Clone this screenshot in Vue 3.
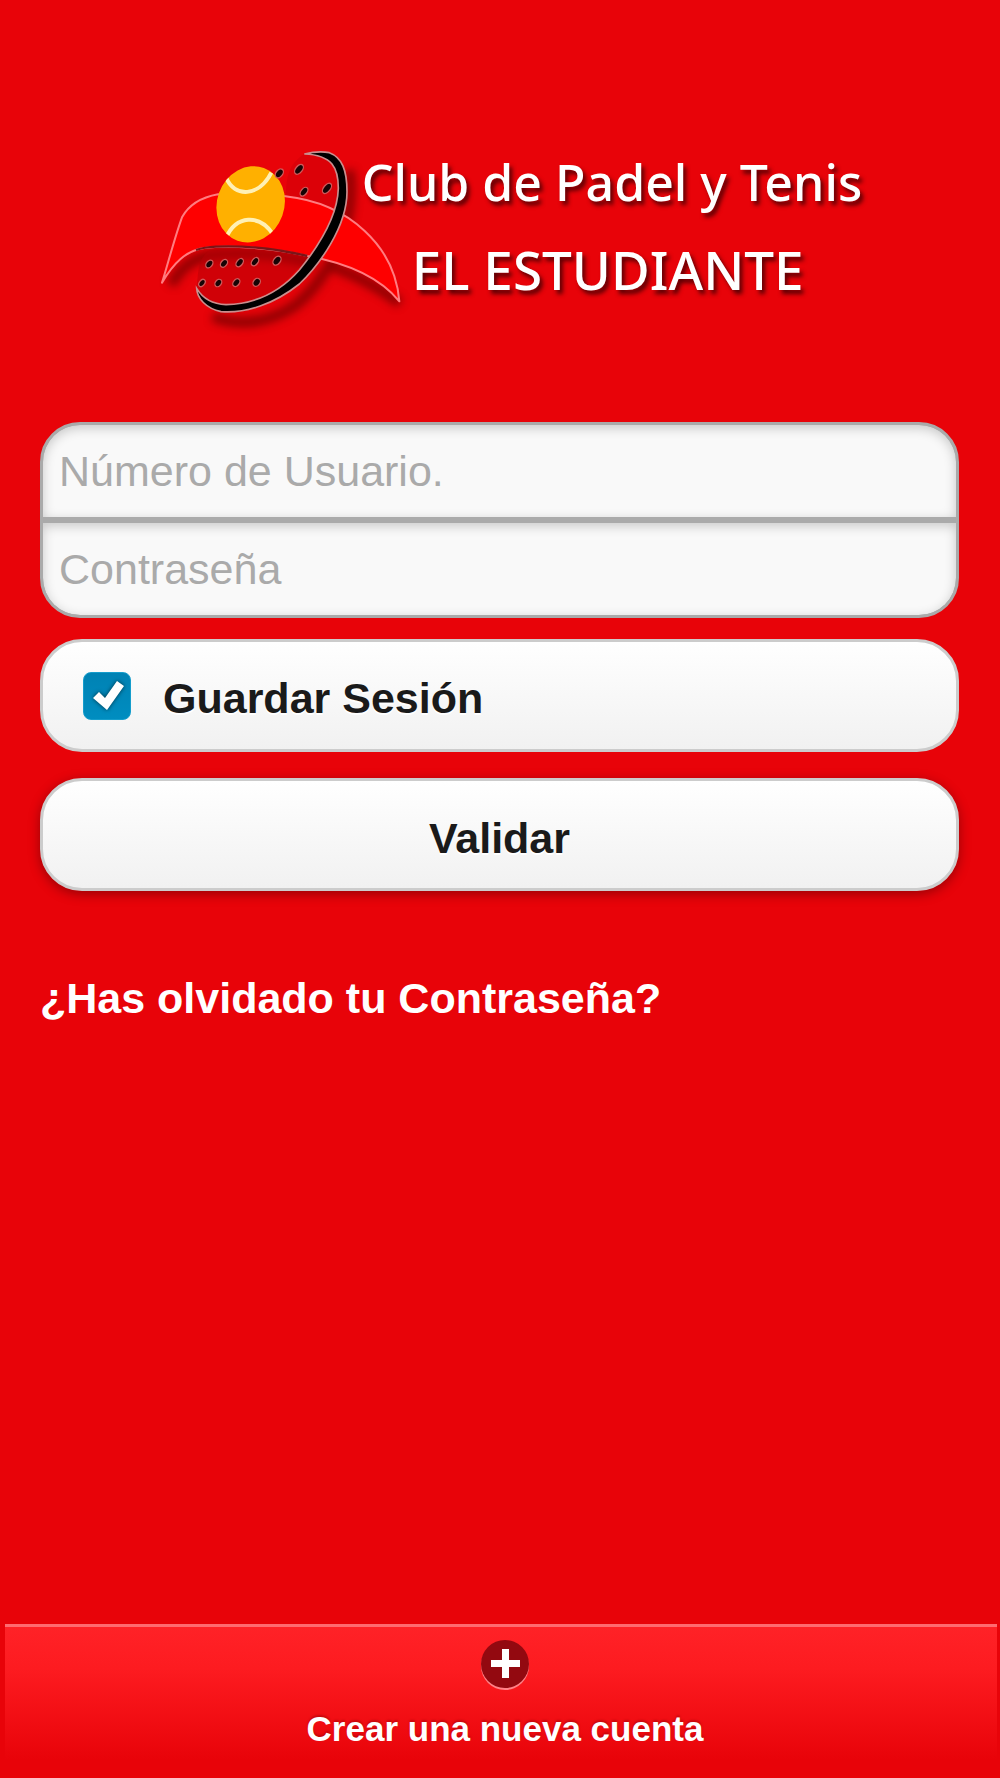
<script setup>
import { ref } from 'vue'

const user = ref('')
const password = ref('')
const remember = ref(true)

const holes = [
  [400, 130, 10, 15], [459, 118, 10, 17], [474, 185, 9, 15], [543, 175, 10, 18],
  [190, 402, 9, 13], [234, 400, 9, 13], [281, 398, 9, 14], [327, 395, 9, 14], [393, 392, 10, 15],
  [168, 459, 8, 12], [217, 459, 9, 12], [271, 458, 9, 13], [332, 457, 10, 13]
]
</script>

<template>
  <div class="page">
    <header class="logo">
      <svg class="emblem" viewBox="0 0 648 630" aria-hidden="true">
        <defs>
          <filter id="soft" x="-20%" y="-20%" width="140%" height="150%">
            <feGaussianBlur stdDeviation="13" />
          </filter>
          <clipPath id="ball">
            <ellipse cx="314" cy="223" rx="101" ry="116" transform="rotate(20 314 223)" />
          </clipPath>
        </defs>
        <g filter="url(#soft)" fill="none" stroke="#700006" stroke-width="30" opacity=".75">
          <path d="M75 465C110 400 160 372 240 372C350 366 420 378 500 400" />
          <path d="M560 410C640 440 710 480 762 520" />
          <path d="M610 120C635 290 540 450 450 525C370 580 280 590 200 560" />
        </g>
        <path d="M150 478C160 430 150 390 190 362C350 350 440 365 484 378C440 440 390 500 270 524C210 530 170 510 150 478Z" fill="#b80006" opacity=".5" />
        <path d="M475 72C530 64 570 100 575 170C574 200 568 225 556 242C510 215 465 207 420 200C420 140 430 100 475 72Z" fill="#cf0008" opacity=".5" />
        <path d="M48 458C62 415 85 325 108 262C130 222 172 201 216 193L418 199C610 220 747 350 760 514C690 428 580 395 485 378C380 354 250 344 175 354C120 361 82 400 48 458Z" fill="#fe0000" stroke="#ff7c80" stroke-width="6" stroke-linejoin="round" />
        <path d="M150 360C170 353 190 351 210 350C320 346 410 360 484 378" fill="none" stroke="#7a1518" stroke-width="7" />
        <g clip-path="url(#ball)">
          <rect x="190" y="90" width="250" height="260" fill="#ffb000" />
          <path d="M240 142C265 205 340 200 376 128M240 324C270 256 340 250 382 314" fill="none" stroke="#fff0b4" stroke-width="12" />
        </g>
        <g stroke="#d0595a" stroke-width="4">
          <ellipse
            v-for="(h, i) in holes"
            :key="i"
            :cx="h[0]"
            :cy="h[1]"
            :rx="h[2]"
            :ry="h[3]"
            :transform="`rotate(38 ${h[0]} ${h[1]})`"
            fill="#160405"
          />
        </g>
        <path d="M475 72C500 66 528 64 550 68C588 82 603 120 603 185C603 290 520 405 460 462C385 522 300 551 225 545C180 535 153 505 152 475C170 505 195 522 240 524C330 522 400 488 460 420C525 340 575 250 577 175C577 115 560 75 475 72Z" fill="#000" stroke="#c98e8e" stroke-width="5" />
      </svg>
      <h1 class="name">
        <span>Club de Padel y Tenis</span>
        <span class="second">EL ESTUDIANTE</span>
      </h1>
    </header>

    <form class="form" @submit.prevent>
      <div class="fields">
        <input v-model="user" type="text" placeholder="Número de Usuario." aria-label="Número de Usuario" />
        <input v-model="password" type="password" placeholder="Contraseña" aria-label="Contraseña" />
      </div>

      <label class="bar remember">
        <span class="tick">
          <input v-model="remember" type="checkbox" />
          <svg v-if="remember" viewBox="0 0 48 48" aria-hidden="true">
            <path d="M10 26L16 20L22 26L34 9L41 14L24 38Z" />
          </svg>
        </span>
        <span class="caption">Guardar Sesión</span>
      </label>

      <button class="bar submit" type="submit">Validar</button>
    </form>

    <a class="forgot" href="#">¿Has olvidado tu Contraseña?</a>

    <footer class="footer">
      <a class="create" href="#">
        <svg viewBox="0 0 50 52" aria-hidden="true">
          <circle cx="25" cy="27" r="24" fill="#ff8288" />
          <circle cx="25" cy="25" r="24" fill="#930910" />
          <path d="M22 10H29V21H40V28H29V39H22V28H11V21H22Z" fill="#fff" />
        </svg>
        <span>Crear una nueva cuenta</span>
      </a>
    </footer>
  </div>
</template>

<style>
body {
  margin: 0;
  background: #e80309;
}
</style>

<style scoped>
.page {
  display: flex;
  flex-direction: column;
  min-height: 100vh;
  font-family: "Liberation Sans", Arial, sans-serif;
  font-size: 43px;
  color: #fff;
  background: #e80309;
}

.logo {
  display: flex;
  justify-content: center;
  padding: 130px 0 0 8px;
}

.emblem {
  flex: none;
  width: 216px;
  height: 210px;
  overflow: visible;
}

.name {
  display: flex;
  flex-direction: column;
  margin: 8px 0 0;
  font-family: "Noto Sans", sans-serif;
  font-size: 50px;
  font-weight: 500;
  line-height: 88px;
  white-space: nowrap;
  text-shadow: 3px 4px 4px #5a0004;
}

.second {
  padding-left: 50px;
  font-size: 53px;
}

.form {
  display: flex;
  flex-direction: column;
  padding: 0 41px 0 40px;
  margin-top: 82px;
}

.fields {
  display: flex;
  flex-direction: column;
  gap: 6px;
  border: 3px solid #aaa;
  border-radius: 40px;
  overflow: hidden;
  background: #aaa;
}

.fields input {
  box-sizing: border-box;
  width: 100%;
  height: 92px;
  padding: 0 16px;
  border: 0;
  border-radius: 0;
  outline: 0;
  font: inherit;
  color: #333;
  background: #f9f9f9;
  box-shadow: inset 0 3px 12px rgba(0, 0, 0, 0.2);
}

.fields input:first-child {
  border-radius: 37px 37px 0 0;
}

.fields input:last-child {
  border-radius: 0 0 37px 37px;
}

.fields input::placeholder {
  color: #aaa;
  opacity: 1;
}

.bar {
  box-sizing: border-box;
  height: 113px;
  border: 3px solid #ccc;
  border-radius: 42px;
  font: inherit;
  font-weight: 700;
  color: #1a1a1a;
  background: linear-gradient(#fff, #f1f1f1);
  text-shadow: 0 2px 0 #fff;
}

.remember {
  display: flex;
  align-items: center;
  gap: 32px;
  margin-top: 21px;
  padding-left: 40px;
}

.caption {
  padding-top: 6px;
}

.tick {
  display: grid;
  width: 48px;
  height: 48px;
}

.tick input,
.tick svg {
  grid-area: 1 / 1;
  width: 48px;
  height: 48px;
}

.tick input {
  appearance: none;
  margin: 0;
  border: 1px solid #159dcc;
  border-radius: 8px;
  background: linear-gradient(#0082b4, #008dc0);
}

.tick path {
  fill: #fff;
  filter: drop-shadow(0 0 2px #034);
}

.submit {
  margin-top: 26px;
  padding-top: 8px;
  box-shadow: 0 3px 12px rgba(0, 0, 0, 0.35);
}

.forgot {
  align-self: flex-start;
  margin: 82px 40px 40px;
  font-weight: 700;
  line-height: 50px;
  color: #fff;
  text-decoration: none;
}

.footer {
  box-sizing: border-box;
  margin: auto 3px 0 5px;
  border-top: 3px solid #ff6b70;
  background: linear-gradient(#ff2227, #fd1b20 28%, #e80309 88%);
}

.create {
  display: flex;
  flex-direction: column;
  align-items: center;
  gap: 18px;
  padding: 12px 0 29px 8px;
  font-size: 35px;
  font-weight: 700;
  line-height: 40px;
  color: #fff;
  text-decoration: none;
  text-shadow: 0 -2px 2px rgba(140, 0, 5, 0.4);
}

.create svg {
  width: 50px;
  height: 52px;
}
</style>
